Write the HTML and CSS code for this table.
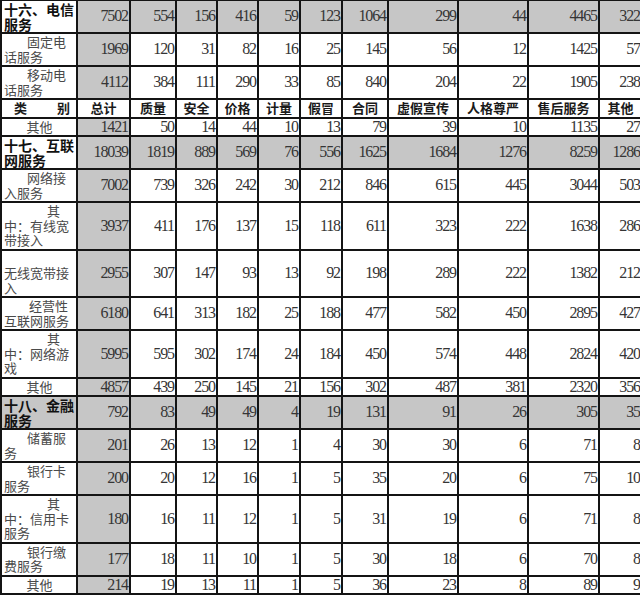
FILE: index.html
```html
<!DOCTYPE html>
<html lang="zh">
<head>
<meta charset="utf-8">
<title>投诉分类统计</title>
<link rel="stylesheet" href="styles.css">
</head>
<body>
<table class="stats">
  <colgroup>
    <col class="c-label"><col class="c-total"><col class="c-46"><col class="c-41"><col class="c-41"><col class="c-42"><col class="c-42"><col class="c-46"><col class="c-70"><col class="c-70"><col class="c-71"><col class="c-last">
  </colgroup>
  <tbody>
    <tr class="sec-row">
      <td class="lb sec">十六、电信<br>服务</td>
      <td class="n g">7502</td><td class="n g">554</td><td class="n g">156</td><td class="n g">416</td><td class="n g">59</td><td class="n g">123</td><td class="n g">1064</td><td class="n g">299</td><td class="n g">44</td><td class="n g">4465</td><td class="n g">322</td>
    </tr>
    <tr>
      <td class="lb ind">固定电<br>话服务</td>
      <td class="n g">1969</td><td class="n">120</td><td class="n">31</td><td class="n">82</td><td class="n">16</td><td class="n">25</td><td class="n">145</td><td class="n">56</td><td class="n">12</td><td class="n">1425</td><td class="n">57</td>
    </tr>
    <tr>
      <td class="lb ind">移动电<br>话服务</td>
      <td class="n g">4112</td><td class="n">384</td><td class="n">111</td><td class="n">290</td><td class="n">33</td><td class="n">85</td><td class="n">840</td><td class="n">204</td><td class="n">22</td><td class="n">1905</td><td class="n">238</td>
    </tr>
    <tr class="head-row">
      <td class="hd hd-cat">类 别</td>
      <td class="hd">总计</td><td class="hd">质量</td><td class="hd">安全</td><td class="hd">价格</td><td class="hd">计量</td><td class="hd">假冒</td><td class="hd">合同</td><td class="hd">虚假宣传</td><td class="hd">人格尊严</td><td class="hd">售后服务</td><td class="hd">其他</td>
    </tr>
    <tr>
      <td class="lb ctr">其他</td>
      <td class="n g">1421</td><td class="n">50</td><td class="n">14</td><td class="n">44</td><td class="n">10</td><td class="n">13</td><td class="n">79</td><td class="n">39</td><td class="n">10</td><td class="n">1135</td><td class="n">27</td>
    </tr>
    <tr class="sec-row">
      <td class="lb sec">十七、互联<br>网服务</td>
      <td class="n g">18039</td><td class="n g">1819</td><td class="n g">889</td><td class="n g">569</td><td class="n g">76</td><td class="n g">556</td><td class="n g">1625</td><td class="n g">1684</td><td class="n g">1276</td><td class="n g">8259</td><td class="n g">1286</td>
    </tr>
    <tr>
      <td class="lb ind">网络接<br>入服务</td>
      <td class="n g">7002</td><td class="n">739</td><td class="n">326</td><td class="n">242</td><td class="n">30</td><td class="n">212</td><td class="n">846</td><td class="n">615</td><td class="n">445</td><td class="n">3044</td><td class="n">503</td>
    </tr>
    <tr>
      <td class="lb ind2">其<br>中：有线宽<br>带接入</td>
      <td class="n g">3937</td><td class="n">411</td><td class="n">176</td><td class="n">137</td><td class="n">15</td><td class="n">118</td><td class="n">611</td><td class="n">323</td><td class="n">222</td><td class="n">1638</td><td class="n">286</td>
    </tr>
    <tr>
      <td class="lb">&nbsp;<br>无线宽带接<br>入</td>
      <td class="n g">2955</td><td class="n">307</td><td class="n">147</td><td class="n">93</td><td class="n">13</td><td class="n">92</td><td class="n">198</td><td class="n">289</td><td class="n">222</td><td class="n">1382</td><td class="n">212</td>
    </tr>
    <tr>
      <td class="lb ind3">经营性<br>互联网服务</td>
      <td class="n g">6180</td><td class="n">641</td><td class="n">313</td><td class="n">182</td><td class="n">25</td><td class="n">188</td><td class="n">477</td><td class="n">582</td><td class="n">450</td><td class="n">2895</td><td class="n">427</td>
    </tr>
    <tr>
      <td class="lb ind2">其<br>中：网络游<br>戏</td>
      <td class="n g">5995</td><td class="n">595</td><td class="n">302</td><td class="n">174</td><td class="n">24</td><td class="n">184</td><td class="n">450</td><td class="n">574</td><td class="n">448</td><td class="n">2824</td><td class="n">420</td>
    </tr>
    <tr>
      <td class="lb ctr">其他</td>
      <td class="n g">4857</td><td class="n">439</td><td class="n">250</td><td class="n">145</td><td class="n">21</td><td class="n">156</td><td class="n">302</td><td class="n">487</td><td class="n">381</td><td class="n">2320</td><td class="n">356</td>
    </tr>
    <tr class="sec-row">
      <td class="lb sec g">十八、金融<br>服务</td>
      <td class="n g">792</td><td class="n g">83</td><td class="n g">49</td><td class="n g">49</td><td class="n g">4</td><td class="n g">19</td><td class="n g">131</td><td class="n g">91</td><td class="n g">26</td><td class="n g">305</td><td class="n g">35</td>
    </tr>
    <tr>
      <td class="lb ind">储蓄服<br>务</td>
      <td class="n g">201</td><td class="n">26</td><td class="n">13</td><td class="n">12</td><td class="n">1</td><td class="n">4</td><td class="n">30</td><td class="n">30</td><td class="n">6</td><td class="n">71</td><td class="n">8</td>
    </tr>
    <tr>
      <td class="lb ind">银行卡<br>服务</td>
      <td class="n g">200</td><td class="n">20</td><td class="n">12</td><td class="n">16</td><td class="n">1</td><td class="n">5</td><td class="n">35</td><td class="n">20</td><td class="n">6</td><td class="n">75</td><td class="n">10</td>
    </tr>
    <tr>
      <td class="lb ind2">其<br>中：信用卡<br>服务</td>
      <td class="n g">180</td><td class="n">16</td><td class="n">11</td><td class="n">12</td><td class="n">1</td><td class="n">5</td><td class="n">31</td><td class="n">19</td><td class="n">6</td><td class="n">71</td><td class="n">8</td>
    </tr>
    <tr>
      <td class="lb ind">银行缴<br>费服务</td>
      <td class="n g">177</td><td class="n">18</td><td class="n">11</td><td class="n">10</td><td class="n">1</td><td class="n">5</td><td class="n">30</td><td class="n">18</td><td class="n">6</td><td class="n">70</td><td class="n">8</td>
    </tr>
    <tr>
      <td class="lb ctr">其他</td>
      <td class="n g">214</td><td class="n">19</td><td class="n">13</td><td class="n">11</td><td class="n">1</td><td class="n">5</td><td class="n">36</td><td class="n">23</td><td class="n">8</td><td class="n">89</td><td class="n">9</td>
    </tr>
  </tbody>
</table>
</body>
</html>
```
FILE: styles.css
```css
html, body {
  margin: 0;
  padding: 0;
  background: #ffffff;
  overflow: hidden;
}

.stats {
  border-collapse: collapse;
  table-layout: fixed;
  width: 641px;
  margin-top: -1px;
}

.c-label { width: 76px; }
.c-total { width: 53px; }
.c-46 { width: 46px; }
.c-41 { width: 41px; }
.c-42 { width: 42px; }
.c-70 { width: 70px; }
.c-71 { width: 71px; }
.c-last { width: 43px; }

.stats td {
  border: 2px solid #141414;
  padding: 1px 1px;
  line-height: 14.5px;
  vertical-align: middle;
  overflow: hidden;
}

.stats .n {
  text-align: right;
  font-family: "Liberation Serif", "Times New Roman", serif;
  font-size: 16px;
  letter-spacing: -1.1px;
  color: #353535;
}

.stats .g {
  background: #c6c6c6;
}

.stats .lb {
  font-family: "Noto Sans CJK SC", "Noto Sans", sans-serif;
  font-size: 13px;
  color: #4a4a4a;
  white-space: nowrap;
  padding-left: 2px;
}

.stats .sec {
  font-weight: 700;
  font-size: 14px;
  color: #111111;
}

.ind { text-indent: 23px; }
.ind2 { text-indent: 43px; }
.ind3 { text-indent: 25px; }
.stats .ctr { text-align: center; }

.stats .hd {
  font-family: "Noto Sans CJK SC", "Noto Sans", sans-serif;
  font-size: 13px;
  font-weight: 700;
  color: #1a1a1a;
  text-align: center;
  white-space: nowrap;
}

.stats .hd-cat {
  text-align: justify;
  text-align-last: justify;
  padding-left: 12px;
  padding-right: 6px;
}
```
